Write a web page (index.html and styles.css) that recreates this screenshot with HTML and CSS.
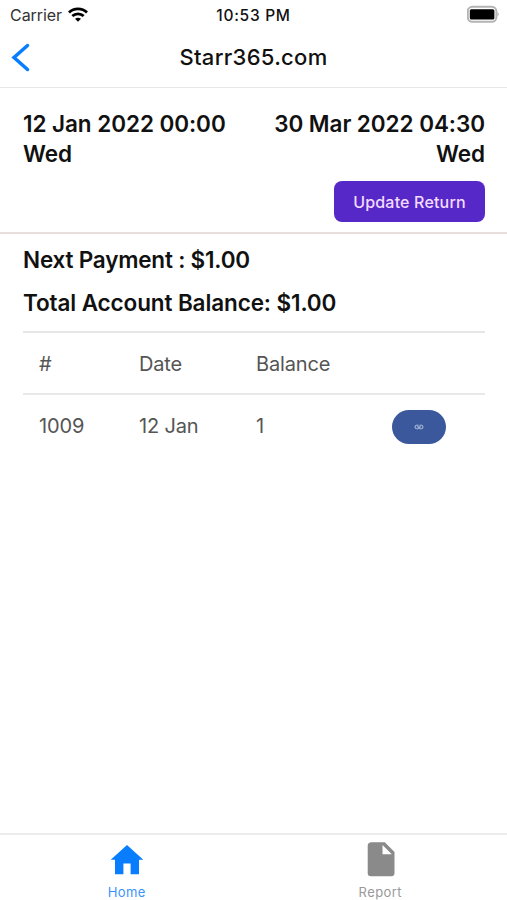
FILE: index.html
```html
<!DOCTYPE html>
<html lang="en">
<head>
<meta charset="utf-8">
<title>Starr365.com</title>
<link rel="stylesheet" href="styles.css">
</head>
<body>
<div class="app">
  <div class="status">
    <div class="carrier"><span class="carrier-name">Carrier</span>
      <svg width="20" height="16" viewBox="0 0 20 16"><g fill="none" stroke="#000" stroke-width="2.8"><path d="M1 5.4C6 .7 14 .7 19 5.4"/><path d="M4.3 9.1C7.6 6 12.4 6 15.7 9.1"/></g><path d="M7 11.8Q10 9.5 13 11.8L10 14.8Z"/></svg>
    </div>
    <span class="clock">10:53 PM</span>
    <svg class="battery" width="32" height="18" viewBox="0 0 32 18"><rect x="0.8" y="1.8" width="28.6" height="15" rx="4.5" fill="#fff" stroke="#b4b4b4" stroke-width="2"/><rect x="2.8" y="4.2" width="24.6" height="10.2" rx="1.5"/><path d="M30.6 7q2.2 2.2 0 4.4z" fill="#aaa"/></svg>
  </div>
  <header class="nav">
    <svg class="back" width="20" height="30" viewBox="0 0 20 30"><path d="M16.5 3.5L3 15.5L16.5 27.5" fill="none" stroke="#087eff" stroke-width="3.5" stroke-linecap="round"/></svg>
    <h1 class="title">Starr365.com</h1>
  </header>
  <section class="period">
    <div class="dates">
      <div><div class="from">12 Jan 2022 00:00</div><div>Wed</div></div>
      <div class="end"><div class="to">30 Mar 2022 04:30</div><div>Wed</div></div>
    </div>
    <button class="update">Update Return</button>
  </section>
  <main class="account">
    <div class="next">Next Payment : $1.00</div>
    <div class="total">Total Account Balance: $1.00</div>
    <div class="table">
      <div class="row head"><span>#</span><span>Date</span><span>Balance</span><span></span></div>
      <div class="row"><span>1009</span><span>12 Jan</span><span>1</span>
        <button class="link" aria-label="Link"><svg width="10" height="6" viewBox="0 0 10 6"><path d="M4.5 1.2H2.8a1.8 1.8 0 0 0 0 3.6h.8Q5 4.8 5 3.3Q5 4.8 6.4 4.8h.8a1.8 1.8 0 0 0 0-3.6H5.5M3 2.9h4" fill="none" stroke="#c3cee8" stroke-width=".9"/></svg></button>
      </div>
    </div>
  </main>
  <nav class="tabs">
    <div class="tab active"><svg width="34" height="36" viewBox="0 0 34 36"><path d="M17 4L33.3 18.8H29V33.3H20.6V22.5H13.4V33.3H5V18.8H.7Z" fill="#087eff"/></svg><span class="home-label">Home</span></div>
    <div class="tab"><svg width="34" height="36" viewBox="0 0 34 36"><path d="M7.5 1.3H20.8L30.5 11V32Q30.5 35.3 27.2 35.3H7Q3.7 35.3 3.7 32V5Q3.7 1.3 7.5 1.3ZM18.5 4V13.3H27.8Z" fill="#8a8a8a" fill-rule="evenodd"/></svg><span class="report-label">Report</span></div>
  </nav>
</div>
</body>
</html>
```
FILE: styles.css
```css
* { box-sizing: border-box; }
body { margin: 0; background: #fff; font-family: Inter, sans-serif; color: #111; }
svg { display: block; flex: none; }
.app { height: 900px; display: flex; flex-direction: column; }
.status { height: 30px; padding: 0 8px 0 10px; display: grid; grid-template-columns: 1fr auto 1fr; align-items: center; font-size: 16px; line-height: 30px; }
.carrier { display: flex; align-items: center; gap: 6px; color: #333; }
.carrier-name { width: 52px; letter-spacing: -.05px; }
.clock { font-weight: 500; font-size: 15.5px; letter-spacing: .7px; margin-right: 2px; padding-top: 1px; line-height: 29px; }
.battery { justify-self: end; margin-bottom: 2px; }
.nav { height: 58px; border-bottom: 1.5px solid #e8e8e8; display: grid; grid-template-columns: 1fr auto 1fr; align-items: center; padding: 0 11px 3px; }
.title { margin: 0; font-size: 22px; font-weight: 500; line-height: 30px; letter-spacing: .3px; }
.period { height: 146px; padding: 21px 22px 0 23px; border-bottom: 2px solid #e9dede; display: flex; flex-direction: column; align-items: flex-end; }
.dates { align-self: stretch; display: flex; justify-content: space-between; font-size: 22.5px; font-weight: 600; line-height: 30px; letter-spacing: -.06px; }
.end { text-align: right; }
.update { margin: 12px 0 0; width: 151px; height: 41px; border: 0; border-radius: 8px; background: #5728c8; color: #f4dcff; font: 500 16px/40px Inter, sans-serif; padding: 0; letter-spacing: .17px; }
.account { flex: 1; padding: 10px 22px 0 23px; font-size: 22.5px; font-weight: 600; line-height: 32px; }
.next { letter-spacing: -.2px; }
.total { margin-top: 11px; letter-spacing: -.11px; }
.table { margin-top: 12px; font-size: 20px; font-weight: 400; color: #555; border-top: 2px solid #e6e6e6; letter-spacing: -.15px; }
.row { height: 62px; display: grid; grid-template-columns: 100px 117px 135.5px 54px; align-items: center; padding-left: 16px; }
.head { height: 62px; padding-top: 2px; border-bottom: 2px solid #e9e9e9; }
.link { width: 54px; height: 34px; margin-top: 2px; border: 0; border-radius: 17px; background: #3a589b; display: grid; place-items: center; padding: 0; }
.tabs { height: 67px; border-top: 2px solid #ececec; display: grid; grid-template-columns: 1fr 1fr; }
.tab { display: flex; flex-direction: column; align-items: center; padding-top: 6px; font-size: 13px; line-height: 18px; color: #999; letter-spacing: .4px; }
.tab span { margin-top: 6px; }
.tab svg { margin-left: 1px; }
.active { color: #3994fc; }
```
